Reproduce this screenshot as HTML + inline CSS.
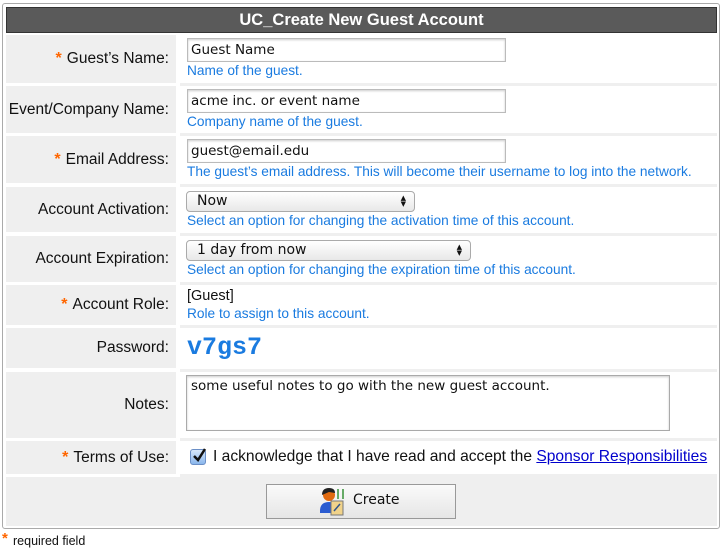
<!DOCTYPE html>
<html><head><style>
*{margin:0;padding:0;box-sizing:border-box}
body{width:728px;height:554px;background:#fff;font-family:"Liberation Sans",Arial,sans-serif;position:relative;overflow:hidden}
.outer{position:absolute;left:2px;top:3px;width:718px;height:526px;border:1px solid #aaa;border-radius:3px;background:#fff}
.hdr{position:absolute;left:6px;top:7px;width:711px;height:26px;background:#5a5a5a;border:1px solid #333;color:#fff;font-weight:bold;font-size:16.5px;text-align:center;line-height:24px}
.lab{position:absolute;left:6px;width:170px;background:#efefef;font-size:15.5px;color:#111;text-align:right;padding-right:7px;display:flex;align-items:center;justify-content:flex-end}
.val{position:absolute;left:180px;width:537px;background:#fff;border-bottom:3px solid #efefef}
.star{color:#f60;font-weight:bold;margin-right:5px;font-size:16px}
.inp{position:absolute;left:7px;height:24px;border:1px solid #bbb;box-shadow:inset 0 1px 2px #ccc;padding-left:3px;line-height:22px;color:#111;font-family:"DejaVu Sans",sans-serif;font-size:13.5px}
.hint{position:absolute;left:7px;font-size:13.7px;color:#1a7be0}
.sel{position:absolute;left:6px;height:21px;border:1px solid #aaa;border-radius:4px;background:linear-gradient(#fff,#e8e8e8);font-family:"DejaVu Sans",sans-serif;font-size:14px;line-height:19px;padding-left:10px;color:#111}
.arr{position:absolute;right:8px;top:3px;font-size:7px;line-height:6px}
</style></head><body>
<div class="outer"></div>
<div class="hdr">UC_Create New Guest Account</div>

<div class="lab" style="top:35px;height:48px"><span class="star">*</span>Guest’s Name:</div>
<div class="val" style="top:35px;height:51px">
<div class="inp" style="top:3px;width:319px">Guest Name</div>
<div class="hint" style="top:28px">Name of the guest.</div></div>

<div class="lab" style="top:86px;height:47px">Event/Company Name:</div>
<div class="val" style="top:86px;height:50px">
<div class="inp" style="top:3px;width:319px">acme inc. or event name</div>
<div class="hint" style="top:28px">Company name of the guest.</div></div>

<div class="lab" style="top:136px;height:47px"><span class="star">*</span>Email Address:</div>
<div class="val" style="top:136px;height:51px">
<div class="inp" style="top:3px;width:319px">guest@email.edu</div>
<div class="hint" style="top:28px">The guest’s email address. This will become their username to log into the network.</div></div>

<div class="lab" style="top:187px;height:45px">Account Activation:</div>
<div class="val" style="top:187px;height:49px">
<div class="sel" style="top:4px;width:229px">Now<span class="arr">▲<br>▼</span></div>
<div class="hint" style="top:26px">Select an option for changing the activation time of this account.</div></div>

<div class="lab" style="top:236px;height:46px">Account Expiration:</div>
<div class="val" style="top:236px;height:49px">
<div class="sel" style="top:4px;width:285px">1 day from now<span class="arr">▲<br>▼</span></div>
<div class="hint" style="top:26px">Select an option for changing the expiration time of this account.</div></div>

<div class="lab" style="top:285px;height:40px"><span class="star">*</span>Account Role:</div>
<div class="val" style="top:285px;height:43px">
<div style="position:absolute;left:7px;top:3px;font-size:14.5px;color:#111">[Guest]</div>
<div class="hint" style="top:21px">Role to assign to this account.</div></div>

<div class="lab" style="top:328px;height:40px">Password:</div>
<div class="val" style="top:328px;height:44px">
<div style="position:absolute;left:7px;top:5px;font-family:'Liberation Mono',monospace;font-weight:bold;font-size:25px;color:#1a7be0">v7gs7</div></div>

<div class="lab" style="top:372px;height:66px">Notes:</div>
<div class="val" style="top:372px;height:69px">
<div style="position:absolute;left:6px;top:3px;width:484px;height:56px;border:1px solid #aaa;box-shadow:inset 0 1px 2px #ccc;font-family:'DejaVu Sans',sans-serif;font-size:13.5px;padding:2px 4px;color:#111">some useful notes to go with the new guest account.</div></div>

<div class="lab" style="top:441px;height:33px"><span class="star">*</span>Terms of Use:</div>
<div class="val" style="top:441px;height:36px">
<div style="position:absolute;left:10px;top:8px;width:16px;height:16px;border:1px solid #6b8fc6;border-radius:3px;background:linear-gradient(#d8e8fb,#8ab6ec)"><svg width="16" height="16" style="position:absolute;left:0;top:-3px"><path d="M3 9 L7 13 L14 2" stroke="#111" stroke-width="2.5" fill="none"/></svg></div>
<div style="position:absolute;left:33px;top:7px;font-size:15.6px;color:#111">I acknowledge that I have read and accept the <span style="color:#00c;text-decoration:underline">Sponsor Responsibilities</span></div></div>

<div style="position:absolute;left:6px;top:477px;width:711px;height:49px;background:#efefef"></div>
<div style="position:absolute;left:266px;top:484px;width:190px;height:35px;border:1px solid #999;background:linear-gradient(#fafafa,#e6e6e6)">
<svg width="28" height="30" style="position:absolute;left:52px;top:2px"><circle cx="10" cy="8" r="6" fill="#e06a10"/><path d="M3 8 Q3 1 10 1 Q16 1 16 6 L10 5 Z" fill="#222"/><path d="M1 24 Q1 15 10 15 Q17 15 18 22 L18 26 L1 26Z" fill="#2a5bd0"/><rect x="12" y="14" width="12" height="14" fill="#f1d38a" stroke="#777"/><path d="M15 24 L21 17" stroke="#358" stroke-width="1.5"/><path d="M19 2 L19 12 M24 2 L24 12" stroke="#6a6" stroke-width="2"/></svg>
<span style="position:absolute;left:86px;top:7px;font-family:'DejaVu Sans',sans-serif;font-size:14px;color:#111">Create</span></div>

<div style="position:absolute;left:2px;top:530px;font-size:15px;color:#f60;font-weight:bold">*</div>
<div style="position:absolute;left:13px;top:534px;font-size:12.5px;color:#111">required field</div>
</body></html>
